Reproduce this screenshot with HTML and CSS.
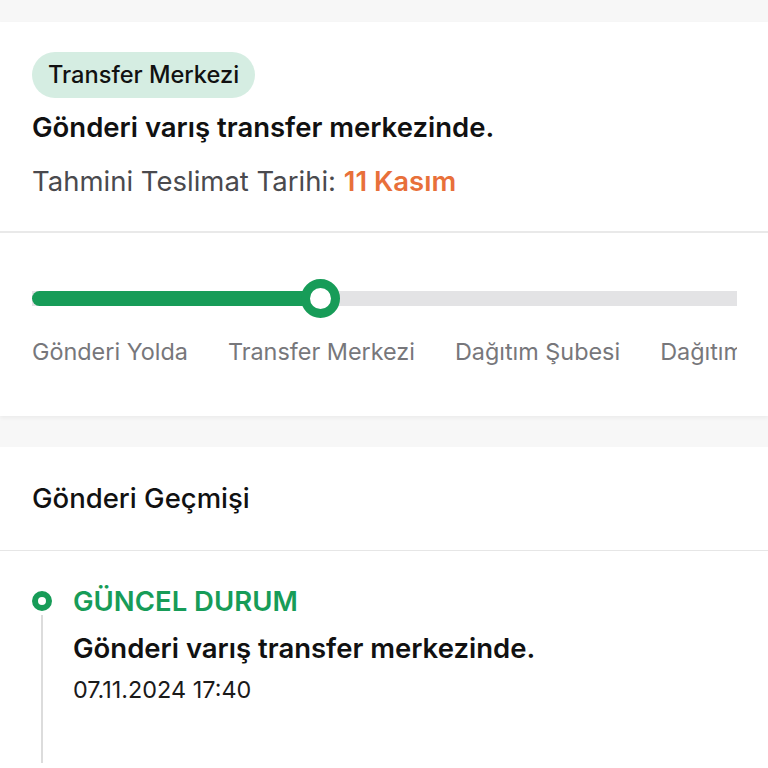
FILE: index.html
```html
<!DOCTYPE html>
<html lang="tr">
<head>
    <meta charset="UTF-8">
    <meta name="viewport" content="width=device-width, initial-scale=1.0">
    <title>Gönderi Takibi</title>
    <link rel="stylesheet" href="styles.css">
</head>
<body>
    <div class="page">
        <div class="status-card">
            <div class="summary">
                <span class="badge">Transfer Merkezi</span>
                <div class="summary-title">Gönderi varış transfer merkezinde.</div>
                <div class="eta">Tahmini Teslimat Tarihi: <span class="eta-date">11 Kasım</span></div>
            </div>

            <div class="progress">
                <div class="track">
                    <div class="track-fill"></div>
                    <div class="track-thumb"></div>
                </div>
                <div class="steps">
                    <span>Gönderi Yolda</span>
                    <span>Transfer Merkezi</span>
                    <span>Dağıtım Şubesi</span>
                    <span>Dağıtımda</span>
                </div>
            </div>
        </div>

        <div class="history-card">
            <div class="history-header">Gönderi Geçmişi</div>
            <div class="timeline">
                <div class="event current">
                    <div class="event-rail">
                        <span class="event-dot"></span>
                        <span class="event-line"></span>
                    </div>
                    <div class="event-body">
                        <div class="event-label">GÜNCEL DURUM</div>
                        <div class="event-text">Gönderi varış transfer merkezinde.</div>
                        <div class="event-date">07.11.2024 17:40</div>
                    </div>
                </div>
            </div>
        </div>
    </div>
</body>
</html>
```

FILE: styles.css
```css
* {
    margin: 0;
    padding: 0;
    box-sizing: border-box;
}

html, body {
    height: 100%;
    overflow: hidden;
}

body {
    font-family: Inter, 'Noto Sans', sans-serif;
    background: #f7f7f7;
    color: #111;
}

.page {
    padding-top: 22px;
    display: flex;
    flex-direction: column;
    gap: 31px;
}

.status-card {
    background: #fff;
    box-shadow: 0 2px 4px rgba(0,0,0,0.05);
}

.summary {
    padding: 30px 32px 34px;
    border-bottom: 2px solid #e9e9e9;
    display: flex;
    flex-direction: column;
    align-items: flex-start;
}

.badge {
    background: #d5ede2;
    color: #111;
    font-size: 23.6px;
    font-weight: 500;
    height: 46px;
    line-height: 46px;
    padding: 0 16px;
    border-radius: 23px;
}

.summary-title {
    margin-top: 13px;
    font-size: 27.5px;
    line-height: 32px;
    font-weight: 600;
}

.eta {
    margin-top: 22px;
    font-size: 27.5px;
    line-height: 32px;
    color: #4a4a4e;
}

.eta-date {
    color: #e8703a;
    font-weight: 600;
}

.progress {
    padding: 46px 31px 50px 32px;
}

.track {
    position: relative;
    height: 38px;
    display: flex;
    align-items: center;
}

.track::before {
    content: "";
    position: absolute;
    left: 0;
    right: 0;
    height: 15px;
    background: #e3e3e5;
}

.track-fill {
    position: relative;
    width: 288px;
    height: 15px;
    background: #179c58;
    border-radius: 8px 0 0 8px;
}

.track-thumb {
    position: absolute;
    left: 269px;
    width: 39px;
    height: 39px;
    border-radius: 50%;
    background: #fff;
    border: 9px solid #179c58;
}

.steps {
    margin-top: 21px;
    display: flex;
    gap: 40px;
    white-space: nowrap;
    overflow: hidden;
    font-size: 23.4px;
    line-height: 28px;
    color: #77777b;
}

.history-card {
    background: #fff;
    flex: 1;
    min-height: 400px;
}

.history-header {
    padding: 35px 32px 36px;
    font-size: 27.5px;
    line-height: 32px;
    font-weight: 500;
    border-bottom: 1px solid #e6e6e6;
}

.timeline {
    padding: 34px 32px 0;
}

.event {
    display: flex;
    gap: 21px;
}

.event-rail {
    display: flex;
    flex-direction: column;
    align-items: center;
    width: 20px;
    padding-top: 6px;
}

.event-dot {
    width: 20px;
    height: 20px;
    border-radius: 50%;
    border: 6px solid #179c58;
    background: #fff;
}

.event-line {
    width: 2px;
    height: 148px;
    margin-top: 4px;
    background: #dcdcdc;
}

.event-label {
    color: #179c58;
    font-size: 27.5px;
    line-height: 32px;
    font-weight: 600;
}

.event-text {
    margin-top: 15px;
    font-size: 27.5px;
    line-height: 32px;
    font-weight: 600;
}

.event-date {
    margin-top: 12px;
    font-size: 23.4px;
    line-height: 28px;
    color: #1a1a1a;
}
```
